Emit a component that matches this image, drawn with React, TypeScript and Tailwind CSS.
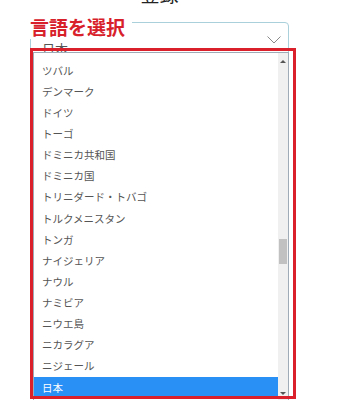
const countries = [
  "ツバル",
  "デンマーク",
  "ドイツ",
  "トーゴ",
  "ドミニカ共和国",
  "ドミニカ国",
  "トリニダード・トバゴ",
  "トルクメニスタン",
  "トンガ",
  "ナイジェリア",
  "ナウル",
  "ナミビア",
  "ニウエ島",
  "ニカラグア",
  "ニジェール",
  "日本",
  "ニュージーランド",
];

const selected = "日本";

const App = () => {
  return (
    <div className="h-[400px] w-[338px] overflow-hidden bg-white font-['Noto_Sans_CJK_JP',sans-serif]">
      <div className="ml-[30px] w-[259px]">
        <h1 className="-mt-[18px] h-[24px] text-center text-[19px] leading-[24px] text-[#222]">
          登録
        </h1>

        <div className="relative mt-[16px]">
          {/* select box */}
          <div className="flex h-[40px] justify-between rounded-[4px] border border-[#a9d0db] pl-[11px] pr-[7px]">
            <span className="mt-[18px] text-[13px] leading-[16px] text-[#555]">日本</span>
            <svg width="14" height="8" viewBox="0 0 14 8" className="mt-[13px]">
              <polyline points="0.5,0.5 7,7 13.5,0.5" fill="none" stroke="#8a8a8a" strokeWidth="1" />
            </svg>
          </div>

          {/* annotation label */}
          <div className="absolute -left-[6px] -top-[7px] h-[24px] w-[108px] bg-white pl-[6px] text-[19px] font-bold leading-[24px] text-[#d7202a]">
            言語を選択
          </div>

          {/* open dropdown list */}
          <div className="absolute left-[3px] top-[30px] flex h-[350px] w-[256px] overflow-hidden border border-[#9fabb6] bg-white">
            <ul className="flex-1 pt-[7px]">
              {countries.map((c) => (
                <li
                  key={c}
                  className={
                    c === selected
                      ? "flex h-[21.13px] items-center bg-[#2990f5] pl-[8px] text-[10.5px] text-white"
                      : "flex h-[21.13px] items-center pl-[8px] text-[10.5px] text-[#555]"
                  }
                >
                  {c}
                </li>
              ))}
            </ul>
            <div className="flex w-[10px] flex-col bg-[#f0f0f0]">
              <div className="flex h-[16px] items-center justify-center">
                <div className="h-0 w-0 border-x-[3px] border-b-[3px] border-x-transparent border-b-[#555]" />
              </div>
              <div className="mx-[1px] mt-[170px] h-[25px] bg-[#c1c1c1]" />
              <div className="flex-1" />
              <div className="flex h-[16px] items-center justify-center">
                <div className="h-0 w-0 border-x-[3px] border-t-[3px] border-x-transparent border-t-[#555]" />
              </div>
            </div>
          </div>

          {/* red annotation frame */}
          <div className="pointer-events-none absolute left-0 top-[26px] h-[351px] w-[266px] border-[3px] border-[#d9202b]" />
        </div>
      </div>
    </div>
  );
};

export default App;
